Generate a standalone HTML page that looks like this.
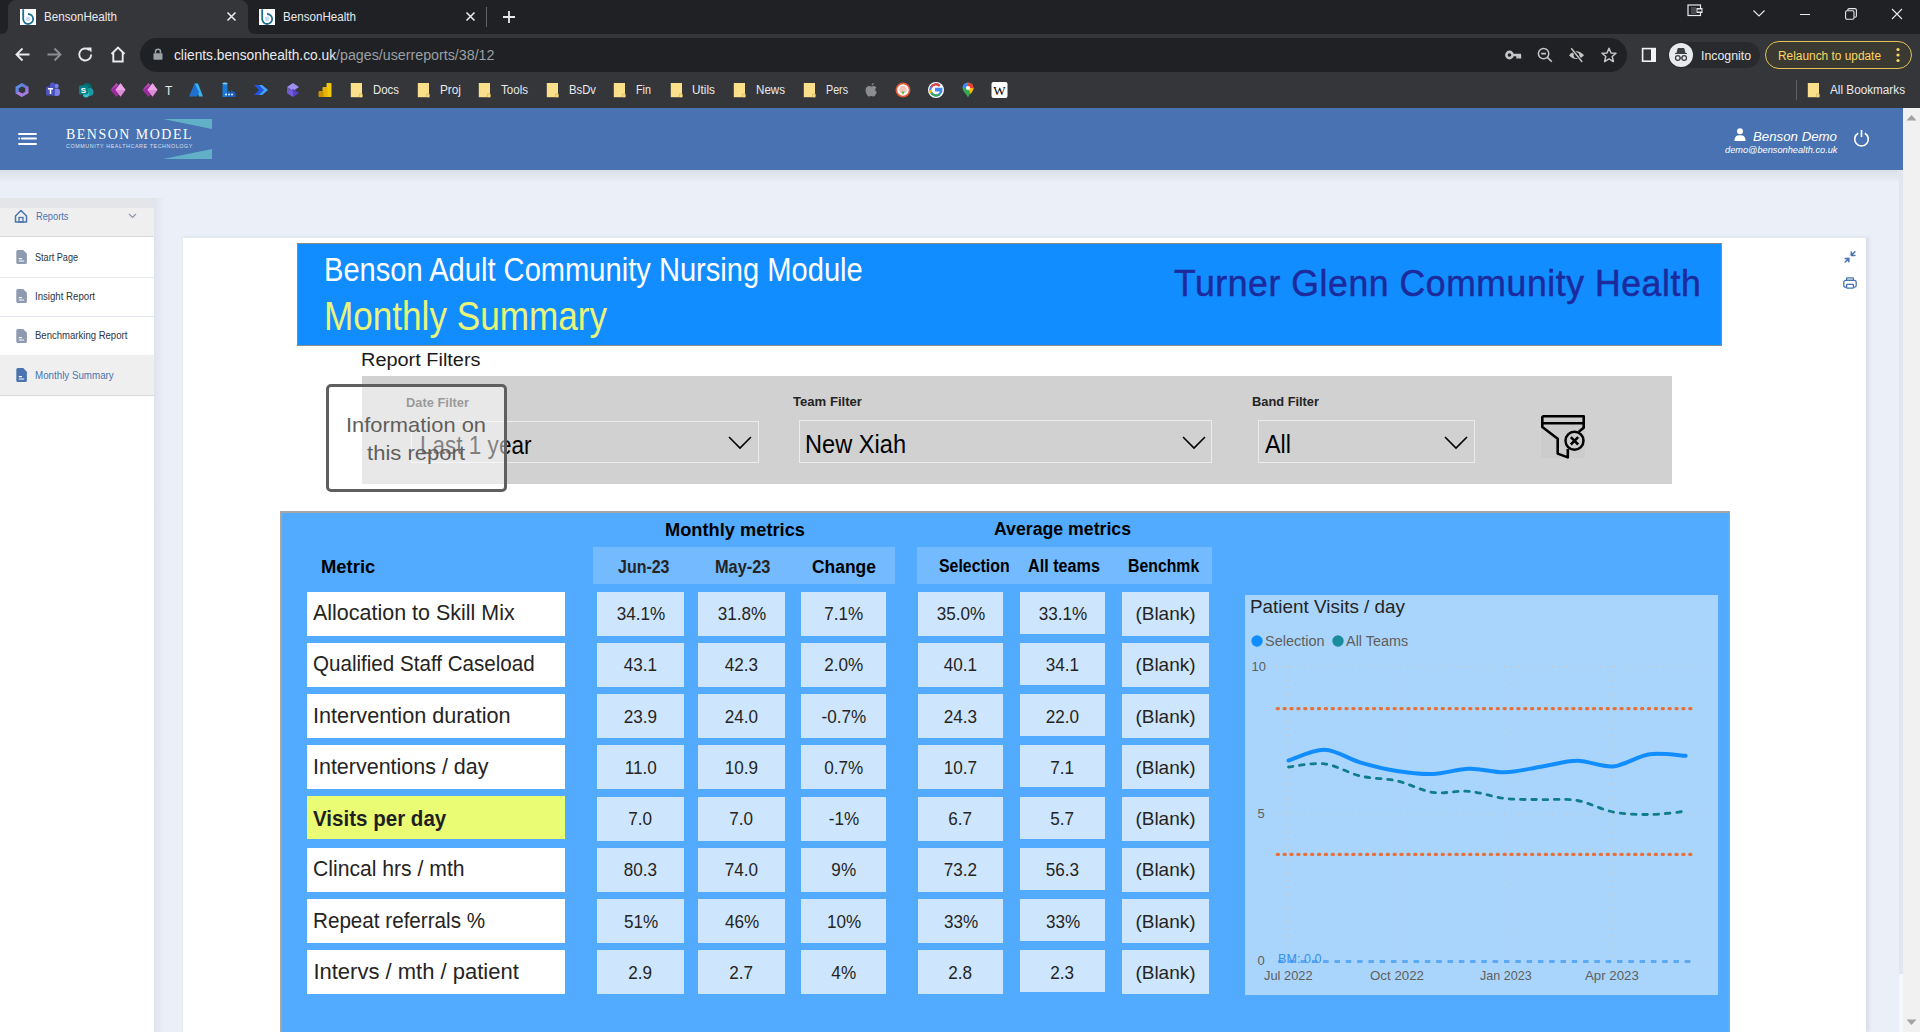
<!DOCTYPE html>
<html><head><meta charset="utf-8"><title>BensonHealth</title>
<style>
html,body{margin:0;padding:0;width:1920px;height:1032px;overflow:hidden;background:#ebeff7;font-family:'Liberation Sans', sans-serif;}
.b{position:absolute;box-sizing:border-box;}
.t{position:absolute;white-space:nowrap;}
</style></head><body>
<div class=b style="left:0px;top:0px;width:1920px;height:34px;background:#202124;"></div>
<div class=b style="left:0px;top:34px;width:1920px;height:74px;background:#35363a;"></div>
<div class=b style="left:8px;top:0px;width:240px;height:35px;background:#35363a;border-radius:8px 8px 0 0;"></div>
<svg class=b style="left:0px;top:26px;" width="8" height="8" viewBox="0 0 8 8"><path d="M0 8 Q8 8 8 0 L8 8 Z" fill="#35363a"/></svg>
<svg class=b style="left:248px;top:26px;" width="8" height="8" viewBox="0 0 8 8"><path d="M8 8 Q0 8 0 0 L0 8 Z" fill="#35363a"/></svg>
<svg class=b style="left:20px;top:9px;" width="16" height="16" viewBox="0 0 16 16"><rect x="0" y="0" width="16" height="16" fill="#fff"/><path d="M3.2 0.3 V10 A5 5 0 1 0 8 5" fill="none" stroke="#1f6f91" stroke-width="1.8"/><circle cx="8.1" cy="9.8" r="2.4" fill="#c9ddf2"/></svg>
<svg class=b style="left:259px;top:9px;" width="16" height="16" viewBox="0 0 16 16"><rect x="0" y="0" width="16" height="16" fill="#fff"/><path d="M3.2 0.3 V10 A5 5 0 1 0 8 5" fill="none" stroke="#1f6f91" stroke-width="1.8"/><circle cx="8.1" cy="9.8" r="2.4" fill="#c9ddf2"/></svg>
<div class=t style="top:11.0px;font-size:12px;line-height:12px;color:#e8eaed;left:44.0px;transform:scaleX(0.968);transform-origin:0 0;">BensonHealth</div>
<div class=t style="top:11.0px;font-size:12px;line-height:12px;color:#e8eaed;left:283.0px;transform:scaleX(0.968);transform-origin:0 0;">BensonHealth</div>
<svg class=b style="left:226px;top:11px;" width="11" height="11" viewBox="0 0 11 11"><path d="M1.5 1.5 L9.5 9.5 M9.5 1.5 L1.5 9.5" stroke="#e8eaed" stroke-width="1.6"/></svg>
<svg class=b style="left:465px;top:11px;" width="11" height="11" viewBox="0 0 11 11"><path d="M1.5 1.5 L9.5 9.5 M9.5 1.5 L1.5 9.5" stroke="#e8eaed" stroke-width="1.6"/></svg>
<div class=b style="left:486px;top:7px;width:1px;height:20px;background:#5f6368;"></div>
<svg class=b style="left:502px;top:10px;" width="14" height="14" viewBox="0 0 14 14"><path d="M7 1 V13 M1 7 H13" stroke="#e8eaed" stroke-width="1.8"/></svg>
<svg class=b style="left:1687px;top:4px;" width="18" height="13" viewBox="0 0 18 13"><rect x="1" y="1" width="12.5" height="10.5" fill="none" stroke="#e8eaed" stroke-width="1.2"/><rect x="9.5" y="4" width="6" height="5" fill="#e8eaed"/><rect x="10.5" y="5.5" width="4" height="2" fill="#202124"/><rect x="4" y="3" width="5" height="7" fill="#5f6368" opacity=".6"/></svg>
<svg class=b style="left:1752px;top:9px;" width="14" height="9" viewBox="0 0 14 9"><path d="M1.5 1.5 L7 7 L12.5 1.5" fill="none" stroke="#e8eaed" stroke-width="1.1"/></svg>
<div class=b style="left:1800px;top:14px;width:10px;height:1px;background:#e8eaed;"></div>
<svg class=b style="left:1845px;top:8px;" width="12" height="12" viewBox="0 0 12 12"><rect x="0.6" y="2.8" width="8.4" height="8.4" rx="1.4" fill="none" stroke="#e8eaed" stroke-width="1.1"/><path d="M2.8 2.5 V2 A1.4 1.4 0 0 1 4.2 0.6 H10 A1.4 1.4 0 0 1 11.4 2 V7.8 A1.4 1.4 0 0 1 10 9.2 H9.3" fill="none" stroke="#e8eaed" stroke-width="1.1"/></svg>
<svg class=b style="left:1891px;top:8px;" width="12" height="12" viewBox="0 0 12 12"><path d="M1 1 L11 11 M11 1 L1 11" stroke="#e8eaed" stroke-width="1.1"/></svg>
<svg class=b style="left:14px;top:46px;" width="17" height="17" viewBox="0 0 17 17"><path d="M15.5 8.5 H2.5 M8.5 2.5 L2.5 8.5 L8.5 14.5" fill="none" stroke="#e8eaed" stroke-width="1.9"/></svg>
<svg class=b style="left:46px;top:46px;" width="17" height="17" viewBox="0 0 17 17"><path d="M1.5 8.5 H14.5 M8.5 2.5 L14.5 8.5 L8.5 14.5" fill="none" stroke="#8b8e93" stroke-width="1.9"/></svg>
<svg class=b style="left:77px;top:46px;" width="17" height="17" viewBox="0 0 17 17"><path d="M14.2 8.5 A6 6 0 1 1 12.3 4.1" fill="none" stroke="#e8eaed" stroke-width="1.9"/><path d="M9.5 1.5 H14.5 V6.5 Z" fill="#e8eaed"/></svg>
<svg class=b style="left:109px;top:45px;" width="18" height="19" viewBox="0 0 18 19"><path d="M2.5 9 L9 2.5 L15.5 9 M4.3 7.5 V16.5 H13.7 V7.5" fill="none" stroke="#e8eaed" stroke-width="1.9"/></svg>
<div class=b style="left:140px;top:38px;width:1487px;height:34px;background:#202124;border-radius:17px;"></div>
<svg class=b style="left:153px;top:48px;" width="10" height="12" viewBox="0 0 10 12"><path d="M2.5 5.5 V3.8 A2.5 2.5 0 0 1 7.5 3.8 V5.5" fill="none" stroke="#9aa0a6" stroke-width="1.5"/><rect x="0.5" y="5.3" width="9" height="6.5" rx="1" fill="#9aa0a6"/></svg>
<div class=t style="top:47.8px;font-size:14px;line-height:14px;color:#e8eaed;left:174.0px;transform:scaleX(0.982);transform-origin:0 0;">clients.bensonhealth.co.uk</div>
<div class=t style="top:47.8px;font-size:14px;line-height:14px;color:#9aa0a6;left:336.0px;transform:scaleX(1.018);transform-origin:0 0;">/pages/userreports/38/12</div>
<svg class=b style="left:1505px;top:49px;" width="17" height="12" viewBox="0 0 17 12"><circle cx="4.5" cy="6" r="3.1" fill="none" stroke="#c4c7c5" stroke-width="2.6"/><path d="M7.5 6 H16 M12.5 6 V9.5 M15 6 V9.5" fill="none" stroke="#c4c7c5" stroke-width="2.4"/></svg>
<svg class=b style="left:1537px;top:47px;" width="16" height="16" viewBox="0 0 16 16"><circle cx="6.6" cy="6.6" r="5.2" fill="none" stroke="#c4c7c5" stroke-width="1.5"/><path d="M10.4 10.4 L14.8 14.8 M4.2 6.6 H9" stroke="#c4c7c5" stroke-width="1.6"/></svg>
<svg class=b style="left:1568px;top:47px;" width="17" height="16" viewBox="0 0 17 16"><path d="M1 8.2 Q8.5 0.5 16 8.2 Q8.5 15.9 1 8.2 Z" fill="#c4c7c5"/><circle cx="8.5" cy="8.2" r="2.8" fill="#202124"/><path d="M3.2 1.2 L14.2 15" stroke="#202124" stroke-width="3"/><path d="M3.2 1.2 L14.2 15" stroke="#c4c7c5" stroke-width="1.4"/></svg>
<svg class=b style="left:1601px;top:47px;" width="16" height="16" viewBox="0 0 16 16"><path d="M8 1.2 L10 6 L15 6.3 L11.2 9.5 L12.4 14.6 L8 11.9 L3.6 14.6 L4.8 9.5 L1 6.3 L6 6 Z" fill="none" stroke="#c4c7c5" stroke-width="1.5" stroke-linejoin="round"/></svg>
<svg class=b style="left:1641px;top:47px;" width="16" height="16" viewBox="0 0 16 16"><rect x="1.6" y="1.6" width="12.6" height="12.6" fill="none" stroke="#f1f3f4" stroke-width="1.6"/><rect x="10" y="1" width="5" height="14" fill="#f1f3f4"/></svg>
<div class=b style="left:1668px;top:42px;width:92px;height:26px;background:#292a2d;border-radius:13px;"></div>
<svg class=b style="left:1669px;top:43px;" width="24" height="24" viewBox="0 0 24 24"><circle cx="12" cy="12" r="12" fill="#e8eaed"/><path d="M6 10.5 H18 M8 10 L9.3 5.5 H14.7 L16 10" fill="#3c4043" stroke="#3c4043" stroke-width="1.2"/><circle cx="8.8" cy="15" r="2.3" fill="none" stroke="#3c4043" stroke-width="1.3"/><circle cx="15.2" cy="15" r="2.3" fill="none" stroke="#3c4043" stroke-width="1.3"/><path d="M11 15 H13" stroke="#3c4043" stroke-width="1.2"/></svg>
<div class=t style="top:49.5px;font-size:12.5px;line-height:12.5px;color:#e8eaed;left:1700.5px;transform:scaleX(0.986);transform-origin:0 0;">Incognito</div>
<div class=b style="left:1765px;top:41px;width:147px;height:28px;background:#3a3a33;border-radius:14px;border:1px solid #e2c35a;"></div>
<div class=t style="top:49.5px;font-size:12.5px;line-height:12.5px;color:#fdd663;left:1778.0px;transform:scaleX(0.950);transform-origin:0 0;">Relaunch to update</div>
<svg class=b style="left:1896px;top:47px;" width="4" height="16" viewBox="0 0 4 16"><circle cx="2" cy="2.5" r="1.6" fill="#fdd663"/><circle cx="2" cy="8" r="1.6" fill="#fdd663"/><circle cx="2" cy="13.5" r="1.6" fill="#fdd663"/></svg>
<svg class=b style="left:14px;top:82px;" width="16" height="16" viewBox="0 0 16 16"><defs><linearGradient id="m365" x1="0" y1="0" x2="1" y2="1"><stop offset="0" stop-color="#4aa8ee"/><stop offset=".5" stop-color="#6f6fd8"/><stop offset="1" stop-color="#d58be8"/></linearGradient></defs><path d="M8 1 L14.5 4.7 V11.3 L8 15 L1.5 11.3 V4.7 Z" fill="url(#m365)"/><path d="M8 4.5 L11.2 6.3 V9.7 L8 11.5 L4.8 9.7 V6.3 Z" fill="#35363a"/><path d="M1.5 11.3 L4.8 9.7 L8 11.5 L8 15 Z" fill="#b07be0"/></svg>
<svg class=b style="left:45px;top:82px;" width="16" height="16" viewBox="0 0 16 16"><circle cx="11.5" cy="4" r="2.2" fill="#7b83eb"/><rect x="8" y="6.5" width="7" height="7.5" rx="3" fill="#7b83eb"/><circle cx="7.5" cy="3.2" r="2.6" fill="#5059c9"/><rect x="1" y="4.5" width="9" height="9" rx="1" fill="#4b53bc"/><path d="M3 6.8 H8 M5.5 6.8 V12" stroke="#fff" stroke-width="1.5"/></svg>
<svg class=b style="left:78px;top:82px;" width="16" height="16" viewBox="0 0 16 16"><circle cx="9" cy="6" r="5" fill="#036c70"/><circle cx="11.5" cy="10" r="4" fill="#1a9ba1"/><circle cx="8" cy="12.5" r="3" fill="#37c6d0"/><rect x="1" y="3.5" width="9" height="9" rx="1" fill="#038387"/><text x="5.5" y="11" font-size="8" font-weight="bold" fill="#fff" text-anchor="middle" font-family="Liberation Sans">S</text></svg>
<svg class=b style="left:110px;top:82px;" width="16" height="16" viewBox="0 0 16 16"><path d="M0.5 8 L6.5 1 L10 5 L7 8 L10 11 L6.5 15 Z" fill="#9b2c9b"/><path d="M0.5 8 L6.5 1 L8.2 3 Z" fill="#b84bb5"/><path d="M5.5 8 L10.5 1.2 L15.5 8 L10.5 14.8 Z" fill="#e08ad9"/><path d="M5.5 8 L10.5 1.2 L15.5 8 Z" fill="#eaa7e4"/></svg>
<svg class=b style="left:142px;top:82px;" width="16" height="16" viewBox="0 0 16 16"><path d="M0.5 8 L6.5 1 L10 5 L7 8 L10 11 L6.5 15 Z" fill="#9b2c9b"/><path d="M0.5 8 L6.5 1 L8.2 3 Z" fill="#b84bb5"/><path d="M5.5 8 L10.5 1.2 L15.5 8 L10.5 14.8 Z" fill="#e08ad9"/><path d="M5.5 8 L10.5 1.2 L15.5 8 Z" fill="#eaa7e4"/></svg>
<svg class=b style="left:188px;top:82px;" width="16" height="16" viewBox="0 0 16 16"><path d="M6.5 1.5 H10 L15 14.5 H11 Z" fill="#39b2f0"/><path d="M6.5 1.5 L1 14.5 H9 L11 10 Z" fill="#1f6fd0"/></svg>
<svg class=b style="left:221px;top:82px;" width="16" height="16" viewBox="0 0 16 16"><rect x="1.5" y="1" width="5" height="14" fill="#1c7ad6"/><ellipse cx="4" cy="1.5" rx="2.5" ry="1" fill="#7ccaf5"/><path d="M6.5 15 V8 L10 10.5 V8 L14.5 11 V15 Z" fill="#1c5fbf"/><circle cx="5" cy="12.5" r="0.9" fill="#fff"/><circle cx="8" cy="12.5" r="0.9" fill="#fff"/><circle cx="11" cy="12.5" r="0.9" fill="#fff"/></svg>
<svg class=b style="left:253px;top:82px;" width="16" height="16" viewBox="0 0 16 16"><path d="M1 3 H9 L15 8 L9 13 H1 L6 8 Z" fill="#1d57e0"/><path d="M9 3 L15 8 L9 13 H6 L11 8 L6 3 Z" fill="#45a2f4"/></svg>
<svg class=b style="left:285px;top:82px;" width="16" height="16" viewBox="0 0 16 16"><path d="M8 1 L14 5 L8 9 L2 5 Z" fill="#9f8ef2"/><path d="M8 7 L14 11 L8 15 L2 11 Z" fill="#5a40c8"/><path d="M2 5 L8 9 L8 15 L2 11 Z" fill="#7b63e0" opacity=".8"/></svg>
<svg class=b style="left:317px;top:82px;" width="16" height="16" viewBox="0 0 16 16"><rect x="9.5" y="1" width="5" height="14" rx="0.8" fill="#f2c811"/><rect x="5.5" y="5" width="5" height="10" rx="0.8" fill="#e8b30b"/><rect x="1.5" y="9" width="5" height="6" rx="0.8" fill="#c99200"/></svg>
<div class=t style="top:85.0px;font-size:12px;line-height:12px;color:#e8eaed;left:165.0px;">T</div>
<svg class=b style="left:350px;top:82px;" width="14" height="16" viewBox="0 0 14 16"><rect x="0.8" y="1" width="11.2" height="14.2" fill="#fbe08c"/><path d="M9.6 15.2 V12 H12.4 V15.2" fill="#fbe08c" stroke="#c9a94a" stroke-width="0.6"/></svg>
<div class=t style="top:84.0px;font-size:12.5px;line-height:12.5px;color:#e8eaed;left:373.0px;transform:scaleX(0.913);transform-origin:0 0;">Docs</div>
<svg class=b style="left:417px;top:82px;" width="14" height="16" viewBox="0 0 14 16"><rect x="0.8" y="1" width="11.2" height="14.2" fill="#fbe08c"/><path d="M9.6 15.2 V12 H12.4 V15.2" fill="#fbe08c" stroke="#c9a94a" stroke-width="0.6"/></svg>
<div class=t style="top:84.0px;font-size:12.5px;line-height:12.5px;color:#e8eaed;left:440.0px;transform:scaleX(0.944);transform-origin:0 0;">Proj</div>
<svg class=b style="left:478px;top:82px;" width="14" height="16" viewBox="0 0 14 16"><rect x="0.8" y="1" width="11.2" height="14.2" fill="#fbe08c"/><path d="M9.6 15.2 V12 H12.4 V15.2" fill="#fbe08c" stroke="#c9a94a" stroke-width="0.6"/></svg>
<div class=t style="top:84.0px;font-size:12.5px;line-height:12.5px;color:#e8eaed;left:501.0px;transform:scaleX(0.925);transform-origin:0 0;">Tools</div>
<svg class=b style="left:546px;top:82px;" width="14" height="16" viewBox="0 0 14 16"><rect x="0.8" y="1" width="11.2" height="14.2" fill="#fbe08c"/><path d="M9.6 15.2 V12 H12.4 V15.2" fill="#fbe08c" stroke="#c9a94a" stroke-width="0.6"/></svg>
<div class=t style="top:84.0px;font-size:12.5px;line-height:12.5px;color:#e8eaed;left:569.0px;transform:scaleX(0.904);transform-origin:0 0;">BsDv</div>
<svg class=b style="left:613px;top:82px;" width="14" height="16" viewBox="0 0 14 16"><rect x="0.8" y="1" width="11.2" height="14.2" fill="#fbe08c"/><path d="M9.6 15.2 V12 H12.4 V15.2" fill="#fbe08c" stroke="#c9a94a" stroke-width="0.6"/></svg>
<div class=t style="top:84.0px;font-size:12.5px;line-height:12.5px;color:#e8eaed;left:636.0px;transform:scaleX(0.863);transform-origin:0 0;">Fin</div>
<svg class=b style="left:670px;top:82px;" width="14" height="16" viewBox="0 0 14 16"><rect x="0.8" y="1" width="11.2" height="14.2" fill="#fbe08c"/><path d="M9.6 15.2 V12 H12.4 V15.2" fill="#fbe08c" stroke="#c9a94a" stroke-width="0.6"/></svg>
<div class=t style="top:84.0px;font-size:12.5px;line-height:12.5px;color:#e8eaed;left:692.0px;transform:scaleX(0.946);transform-origin:0 0;">Utils</div>
<svg class=b style="left:733px;top:82px;" width="14" height="16" viewBox="0 0 14 16"><rect x="0.8" y="1" width="11.2" height="14.2" fill="#fbe08c"/><path d="M9.6 15.2 V12 H12.4 V15.2" fill="#fbe08c" stroke="#c9a94a" stroke-width="0.6"/></svg>
<div class=t style="top:84.0px;font-size:12.5px;line-height:12.5px;color:#e8eaed;left:756.0px;transform:scaleX(0.928);transform-origin:0 0;">News</div>
<svg class=b style="left:803px;top:82px;" width="14" height="16" viewBox="0 0 14 16"><rect x="0.8" y="1" width="11.2" height="14.2" fill="#fbe08c"/><path d="M9.6 15.2 V12 H12.4 V15.2" fill="#fbe08c" stroke="#c9a94a" stroke-width="0.6"/></svg>
<div class=t style="top:84.0px;font-size:12.5px;line-height:12.5px;color:#e8eaed;left:826.0px;transform:scaleX(0.856);transform-origin:0 0;">Pers</div>
<svg class=b style="left:864px;top:82px;" width="15" height="16" viewBox="0 0 15 16"><path d="M7.5 4.5 C9 3.6 11.5 3.8 12.4 5.6 C10.8 6.6 10.9 9.2 12.8 10 C12.2 12 10.8 14.6 9.4 14.6 C8.4 14.6 8.2 14 7.3 14 C6.4 14 6.1 14.6 5.2 14.6 C3.6 14.6 1.6 11 1.6 8.3 C1.6 5.3 3.6 4 5.1 4 C6.2 4 6.8 4.6 7.5 4.5 Z M7.6 3.6 C7.5 2.3 8.6 1.1 9.8 1 C9.9 2.3 8.8 3.6 7.6 3.6 Z" fill="#8a8c90"/></svg>
<svg class=b style="left:895px;top:82px;" width="16" height="16" viewBox="0 0 16 16"><circle cx="8" cy="8" r="7.5" fill="#de5833"/><circle cx="8" cy="8" r="5.8" fill="#fff"/><circle cx="8" cy="7.5" r="3.8" fill="#de5833" opacity=".35"/><path d="M6.5 9.5 L9.5 9.5 L8 13 Z" fill="#4cba3c"/></svg>
<svg class=b style="left:928px;top:82px;" width="16" height="16" viewBox="0 0 16 16"><circle cx="8" cy="8" r="8" fill="#fff"/><path d="M12.6 8.3 H8.1 V6.9 H13.4 A5.6 5.6 0 1 1 11.8 3.8" fill="none" stroke="#4285f4" stroke-width="2.2"/><path d="M3.2 5.3 A5.6 5.6 0 0 1 11.8 3.8" fill="none" stroke="#ea4335" stroke-width="2.2"/><path d="M2.6 8 A5.6 5.6 0 0 0 3.2 10.7" fill="none" stroke="#fbbc05" stroke-width="2.2"/><path d="M3.2 10.7 A5.6 5.6 0 0 0 11.6 12.4" fill="none" stroke="#34a853" stroke-width="2.2"/></svg>
<svg class=b style="left:961px;top:82px;" width="14" height="16" viewBox="0 0 14 16"><path d="M7 15.5 C5 11.5 1.5 9 1.5 6 A5.5 5.5 0 0 1 12.5 6 C12.5 9 9 11.5 7 15.5 Z" fill="#34a853"/><path d="M1.5 6 A5.5 5.5 0 0 1 7 0.5 L7 6 Z" fill="#4285f4"/><path d="M7 0.5 A5.5 5.5 0 0 1 12.5 6 L7 6 Z" fill="#ea4335"/><path d="M12.5 6 C12.5 8 11 10 9.5 12 L7 6 Z" fill="#fbbc05"/><circle cx="7" cy="6" r="2.1" fill="#fff"/></svg>
<svg class=b style="left:991px;top:82px;" width="17" height="16" viewBox="0 0 17 16"><rect x="0.5" y="0" width="16" height="16" rx="2" fill="#fff"/><text x="8.5" y="13" font-size="13" font-family="Liberation Serif" text-anchor="middle" fill="#000">W</text></svg>
<div class=b style="left:1796px;top:80px;width:1px;height:20px;background:#5f6368;"></div>
<svg class=b style="left:1807px;top:82px;" width="14" height="16" viewBox="0 0 14 16"><rect x="0.8" y="1" width="11.2" height="14.2" fill="#fbe08c"/><path d="M9.6 15.2 V12 H12.4 V15.2" fill="#fbe08c" stroke="#c9a94a" stroke-width="0.6"/></svg>
<div class=t style="top:84.0px;font-size:12.5px;line-height:12.5px;color:#e8eaed;left:1830.0px;transform:scaleX(0.939);transform-origin:0 0;">All Bookmarks</div>
<div class=b style="left:1903px;top:108px;width:17px;height:924px;background:#f1f1f1;"></div>
<svg class=b style="left:1906px;top:114px;" width="11" height="7" viewBox="0 0 11 7"><path d="M0.5 6.5 L5.5 1 L10.5 6.5 Z" fill="#a3a3a3"/></svg>
<svg class=b style="left:1906px;top:1019px;" width="11" height="7" viewBox="0 0 11 7"><path d="M0.5 0.5 L5.5 6 L10.5 0.5 Z" fill="#a3a3a3"/></svg>
<div class=b style="left:0px;top:108px;width:1903px;height:62px;background:#4872b1;"></div>
<div class=b style="left:0px;top:170px;width:1903px;height:12px;background:linear-gradient(#d9dee7,#ebeff7);"></div>
<div class=b style="left:1899px;top:170px;width:4px;height:804px;background:#e2e6ef;"></div>
<div class=b style="left:1899px;top:974px;width:4px;height:58px;background:#f6f7fb;"></div>
<svg class=b style="left:17px;top:131px;" width="20" height="15" viewBox="0 0 20 15"><path d="M2 3 H19 M4.8 7.5 H19 M2 13 H19" stroke="#fff" stroke-width="1.9" stroke-linecap="round"/><circle cx="2.2" cy="7.5" r="1" fill="#fff"/></svg>
<svg class=b style="left:163px;top:119px;" width="49" height="41" viewBox="0 0 49 41"><path d="M0 0 H49 V10 Z" fill="#62b0c8"/><path d="M0 40 H49 V30 Z" fill="#62b0c8"/><path d="M49 10 V31" stroke="#62b0c8" stroke-width="0"/></svg>
<div class=t style="top:126.7px;font-size:14.5px;line-height:14.5px;color:#ffffff;font-family:'Liberation Serif', serif;letter-spacing:1.6px;left:66.0px;transform:scaleX(0.959);transform-origin:0 0;">BENSON MODEL</div>
<div class=t style="top:143.5px;font-size:5.4px;line-height:5.4px;color:rgba(255,255,255,.8);letter-spacing:0.6px;left:66.0px;transform:scaleX(0.990);transform-origin:0 0;">COMMUNITY HEALTHCARE TECHNOLOGY</div>
<svg class=b style="left:1734px;top:128px;" width="12" height="13" viewBox="0 0 12 13"><circle cx="6" cy="3.2" r="3" fill="#fff"/><path d="M0.5 13 C0.5 8.5 2.5 7.3 6 7.3 C9.5 7.3 11.5 8.5 11.5 13 Z" fill="#fff"/></svg>
<div class=t style="top:130.0px;font-size:13.2px;line-height:13.2px;color:#ffffff;font-style:italic;left:1752.5px;transform:scaleX(1.005);transform-origin:0 0;">Benson Demo</div>
<div class=t style="top:144.5px;font-size:9.5px;line-height:9.5px;color:#ffffff;font-style:italic;left:1725.0px;transform:scaleX(0.971);transform-origin:0 0;">demo@bensonhealth.co.uk</div>
<svg class=b style="left:1853px;top:129px;" width="17" height="18" viewBox="0 0 17 18"><path d="M5.2 4.3 A6.8 6.8 0 1 0 11.8 4.3" fill="none" stroke="#fff" stroke-width="1.6"/><path d="M8.5 1 V8" stroke="#fff" stroke-width="1.6"/></svg>
<div class=b style="left:154px;top:198px;width:10px;height:834px;background:linear-gradient(90deg,rgba(222,227,237,1),rgba(235,239,247,0));"></div>
<div class=b style="left:0px;top:198px;width:154px;height:834px;background:#ffffff;"></div>
<div class=b style="left:0px;top:198px;width:154px;height:10px;background:#e3e5e8;"></div>
<div class=b style="left:0px;top:208px;width:154px;height:28px;background:#efefef;"></div>
<div class=b style="left:0px;top:236px;width:154px;height:1px;background:#d7d9dd;"></div>
<svg class=b style="left:14px;top:208px;" width="14" height="16" viewBox="0 0 14 16"><path d="M1.5 8 L7 2.5 L12.5 8 V14 H1.5 Z" fill="none" stroke="#4a73b0" stroke-width="1.5" stroke-linejoin="round"/><rect x="5" y="9.5" width="4" height="4.5" fill="none" stroke="#4a73b0" stroke-width="1.3"/></svg>
<div class=t style="top:212.0px;font-size:10px;line-height:10px;color:#4a73b0;left:35.5px;transform:scaleX(0.928);transform-origin:0 0;">Reports</div>
<svg class=b style="left:128px;top:213px;" width="9" height="6" viewBox="0 0 9 6"><path d="M1 1 L4.5 4.5 L8 1" fill="none" stroke="#8a97ad" stroke-width="1.2"/></svg>
<div class=b style="left:0px;top:277px;width:154px;height:1px;background:#e4e8f0;"></div>
<svg class=b style="left:15.5px;top:250px;" width="12" height="14" viewBox="0 0 12 14"><path d="M0.3 1.6 A1.6 1.6 0 0 1 1.9 0 H7.2 L10.9 3.7 V12.4 A1.6 1.6 0 0 1 9.3 14 H1.9 A1.6 1.6 0 0 1 0.3 12.4 Z" fill="#8e9ab0"/><path d="M2.8 8.6 H6 M2.8 11 H8.2" stroke="#fff" stroke-width="1.1"/></svg>
<div class=t style="top:251.8px;font-size:10.6px;line-height:10.6px;color:#2b3340;left:35.3px;transform:scaleX(0.859);transform-origin:0 0;">Start Page</div>
<div class=b style="left:0px;top:316px;width:154px;height:1px;background:#e4e8f0;"></div>
<svg class=b style="left:15.5px;top:289px;" width="12" height="14" viewBox="0 0 12 14"><path d="M0.3 1.6 A1.6 1.6 0 0 1 1.9 0 H7.2 L10.9 3.7 V12.4 A1.6 1.6 0 0 1 9.3 14 H1.9 A1.6 1.6 0 0 1 0.3 12.4 Z" fill="#8e9ab0"/><path d="M2.8 8.6 H6 M2.8 11 H8.2" stroke="#fff" stroke-width="1.1"/></svg>
<div class=t style="top:290.6px;font-size:10.6px;line-height:10.6px;color:#2b3340;left:35.3px;transform:scaleX(0.910);transform-origin:0 0;">Insight Report</div>
<div class=b style="left:0px;top:355px;width:154px;height:1px;background:#e4e8f0;"></div>
<svg class=b style="left:15.5px;top:329px;" width="12" height="14" viewBox="0 0 12 14"><path d="M0.3 1.6 A1.6 1.6 0 0 1 1.9 0 H7.2 L10.9 3.7 V12.4 A1.6 1.6 0 0 1 9.3 14 H1.9 A1.6 1.6 0 0 1 0.3 12.4 Z" fill="#8e9ab0"/><path d="M2.8 8.6 H6 M2.8 11 H8.2" stroke="#fff" stroke-width="1.1"/></svg>
<div class=t style="top:330.1px;font-size:10.6px;line-height:10.6px;color:#2b3340;left:35.3px;transform:scaleX(0.901);transform-origin:0 0;">Benchmarking Report</div>
<div class=b style="left:0px;top:355px;width:154px;height:40px;background:#efefef;"></div>
<div class=b style="left:0px;top:395px;width:154px;height:1px;background:#d7d9dd;"></div>
<svg class=b style="left:15.5px;top:368px;" width="12" height="14" viewBox="0 0 12 14"><path d="M0.3 1.6 A1.6 1.6 0 0 1 1.9 0 H7.2 L10.9 3.7 V12.4 A1.6 1.6 0 0 1 9.3 14 H1.9 A1.6 1.6 0 0 1 0.3 12.4 Z" fill="#4a73b0"/><path d="M2.8 8.6 H6 M2.8 11 H8.2" stroke="#fff" stroke-width="1.1"/></svg>
<div class=t style="top:369.6px;font-size:10.6px;line-height:10.6px;color:#4a73b0;left:35.3px;transform:scaleX(0.922);transform-origin:0 0;">Monthly Summary</div>
<div class=b style="left:182px;top:237px;width:1684px;height:795px;background:#ffffff;border-top:1px solid #e3e8f1;border-left:1px solid #e3e8f1;box-shadow:3px 0 3px rgba(180,190,210,.35);"></div>
<svg class=b style="left:1843px;top:250px;" width="14" height="14" viewBox="0 0 14 14"><path d="M11.9 1.8 L8.3 5.4 M8.3 2.1 V5.4 H11.9 M2.2 12 L5.8 8.4 M2.2 8.4 H5.8 V11.7" fill="none" stroke="#4a73b0" stroke-width="1.5" stroke-linecap="round" stroke-linejoin="round"/></svg>
<svg class=b style="left:1842px;top:276px;" width="16" height="14" viewBox="0 0 16 14"><rect x="4.6" y="1.8" width="6.8" height="2.6" rx="0.8" fill="none" stroke="#4a73b0" stroke-width="1.3"/><rect x="1.8" y="4.4" width="12.4" height="6.8" rx="1.8" fill="none" stroke="#4a73b0" stroke-width="1.3"/><rect x="4.6" y="8.3" width="6.8" height="3.9" rx="0.6" fill="#fff" stroke="#4a73b0" stroke-width="1.3"/></svg>
<div class=b style="left:297px;top:243px;width:1425px;height:103px;background:#118dff;border:1px solid #8c8c8c;"></div>
<div class=t style="top:252.7px;font-size:33px;line-height:33px;color:#ffffff;left:324.0px;transform:scaleX(0.882);transform-origin:0 0;">Benson Adult Community Nursing Module</div>
<div class=t style="top:296.2px;font-size:40px;line-height:40px;color:#e9f57a;left:323.5px;transform:scaleX(0.878);transform-origin:0 0;">Monthly Summary</div>
<div class=t style="top:264.6px;font-size:37px;line-height:37px;color:#1c2a9c;letter-spacing:0.6px;left:1174.0px;transform:scaleX(0.961);transform-origin:0 0;-webkit-text-stroke:0.5px #1c2a9c;">Turner Glenn Community Health</div>
<div class=t style="top:351.9px;font-size:17.5px;line-height:17.5px;color:#1a1a1a;left:361.2px;transform:scaleX(1.138);transform-origin:0 0;">Report Filters</div>
<div class=b style="left:362px;top:376px;width:1310px;height:108px;background:#d1d1d1;"></div>
<div class=t style="top:396.2px;font-size:13.5px;line-height:13.5px;color:#333333;font-weight:bold;left:405.7px;transform:scaleX(0.954);transform-origin:0 0;">Date Filter</div>
<div class=t style="top:395.3px;font-size:13.5px;line-height:13.5px;color:#252423;font-weight:bold;left:793.0px;transform:scaleX(0.971);transform-origin:0 0;">Team Filter</div>
<div class=t style="top:395.3px;font-size:13.5px;line-height:13.5px;color:#252423;font-weight:bold;left:1252.0px;transform:scaleX(0.950);transform-origin:0 0;">Band Filter</div>
<div class=b style="left:411px;top:421px;width:348px;height:42px;background:transparent;border:1.5px solid #ececec;"></div>
<div class=b style="left:799px;top:420px;width:413px;height:43px;background:transparent;border:1.5px solid #ececec;"></div>
<div class=b style="left:1258px;top:420px;width:217px;height:43px;background:transparent;border:1.5px solid #ececec;"></div>
<div class=t style="top:432.8px;font-size:25px;line-height:25px;color:#000000;left:419.5px;transform:scaleX(0.901);transform-origin:0 0;">Last 1 year</div>
<div class=t style="top:432.0px;font-size:25px;line-height:25px;color:#000000;left:805.0px;transform:scaleX(0.944);transform-origin:0 0;">New Xiah</div>
<div class=t style="top:432.0px;font-size:25px;line-height:25px;color:#000000;left:1265.0px;transform:scaleX(0.935);transform-origin:0 0;">All</div>
<svg class=b style="left:728px;top:436px;" width="24" height="14" viewBox="0 0 24 14"><path d="M1 1 L12 12 L23 1" fill="none" stroke="#000" stroke-width="1.6"/></svg>
<svg class=b style="left:1182px;top:436px;" width="24" height="14" viewBox="0 0 24 14"><path d="M1 1 L12 12 L23 1" fill="none" stroke="#000" stroke-width="1.6"/></svg>
<svg class=b style="left:1444px;top:436px;" width="24" height="14" viewBox="0 0 24 14"><path d="M1 1 L12 12 L23 1" fill="none" stroke="#000" stroke-width="1.6"/></svg>
<div class=b style="left:1541px;top:415px;width:44px;height:43px;background:#cccccc;"></div>
<svg class=b style="left:1541px;top:415px;" width="45" height="44" viewBox="0 0 45 44"><path d="M1.3 1.3 H42.7 V12.8 L37.8 16.7 M1.3 8.3 H42.7 M1.3 1.3 V12 L16.7 23.7 V38.6 L26.8 42.4 V34" fill="none" stroke="#000" stroke-width="2.6" stroke-linejoin="round"/><circle cx="33.5" cy="25.8" r="9" fill="#cccccc" stroke="#000" stroke-width="2.5"/><path d="M29.8 22.1 L37.2 29.5 M37.2 22.1 L29.8 29.5" stroke="#000" stroke-width="2.5"/></svg>
<div class=b style="left:326px;top:384px;width:181px;height:108px;background:rgba(255,255,255,0.5);border:3px solid #5f5f5f;border-radius:5px;"></div>
<div class=t style="top:413.7px;font-size:21px;line-height:21px;color:#605e5c;left:345.5px;transform:scaleX(1.043);transform-origin:0 0;">Information on</div>
<div class=t style="top:442.0px;font-size:21px;line-height:21px;color:#605e5c;left:366.5px;transform:scaleX(1.050);transform-origin:0 0;">this report</div>
<div class=b style="left:280px;top:511px;width:1450px;height:521px;background:#53abff;border:2px solid #aaa5a2;border-bottom:none;border-right-width:1.5px;"></div>
<div class=t style="top:557.0px;font-size:19px;line-height:19px;color:#000000;font-weight:bold;left:321.2px;transform:scaleX(0.970);transform-origin:0 0;">Metric</div>
<div class=t style="top:520.7px;font-size:18px;line-height:18px;color:#000000;font-weight:bold;left:665.0px;transform:scaleX(1.014);transform-origin:0 0;">Monthly metrics</div>
<div class=t style="top:520.3px;font-size:18px;line-height:18px;color:#000000;font-weight:bold;left:994.0px;transform:scaleX(0.983);transform-origin:0 0;">Average metrics</div>
<div class=b style="left:593px;top:547px;width:302px;height:37px;background:#73baff;"></div>
<div class=b style="left:917px;top:547px;width:295px;height:37px;background:#73baff;"></div>
<div class=t style="top:558.4px;font-size:18px;line-height:18px;color:#252423;font-weight:bold;left:617.5px;transform:scaleX(0.887);transform-origin:0 0;">Jun-23</div>
<div class=t style="top:558.4px;font-size:18px;line-height:18px;color:#252423;font-weight:bold;left:715.0px;transform:scaleX(0.906);transform-origin:0 0;">May-23</div>
<div class=t style="top:558.4px;font-size:18px;line-height:18px;color:#000000;font-weight:bold;left:812.0px;transform:scaleX(0.969);transform-origin:0 0;">Change</div>
<div class=t style="top:556.9px;font-size:18px;line-height:18px;color:#000000;font-weight:bold;left:938.8px;transform:scaleX(0.882);transform-origin:0 0;">Selection</div>
<div class=t style="top:556.9px;font-size:18px;line-height:18px;color:#000000;font-weight:bold;left:1028.4px;transform:scaleX(0.899);transform-origin:0 0;">All teams</div>
<div class=t style="top:556.9px;font-size:18px;line-height:18px;color:#000000;font-weight:bold;left:1127.8px;transform:scaleX(0.879);transform-origin:0 0;">Benchmk</div>
<div class=b style="left:307px;top:592px;width:258px;height:44px;background:#ffffff;"></div>
<div class=t style="top:602.0px;font-size:22px;line-height:22px;color:#252423;left:313.4px;transform:scaleX(0.976);transform-origin:0 0;">Allocation to Skill Mix</div>
<div class=b style="left:597px;top:592px;width:87px;height:44px;background:#cde6fd;"></div>
<div class=t style="top:604.0px;font-size:19px;line-height:19px;color:#252423;left:613.6px;transform:scaleX(0.9);transform-origin:50% 0;">34.1%</div>
<div class=b style="left:698px;top:592px;width:87px;height:44px;background:#cde6fd;"></div>
<div class=t style="top:604.0px;font-size:19px;line-height:19px;color:#252423;left:714.6px;transform:scaleX(0.9);transform-origin:50% 0;">31.8%</div>
<div class=b style="left:801px;top:592px;width:85px;height:44px;background:#cde6fd;"></div>
<div class=t style="top:604.0px;font-size:19px;line-height:19px;color:#252423;left:821.8px;transform:scaleX(0.9);transform-origin:50% 0;">7.1%</div>
<div class=b style="left:918px;top:592px;width:85px;height:44px;background:#cde6fd;"></div>
<div class=t style="top:604.0px;font-size:19px;line-height:19px;color:#252423;left:933.6px;transform:scaleX(0.9);transform-origin:50% 0;">35.0%</div>
<div class=b style="left:1020px;top:592px;width:85px;height:42px;background:#cde6fd;"></div>
<div class=t style="top:604.0px;font-size:19px;line-height:19px;color:#252423;left:1035.6px;transform:scaleX(0.9);transform-origin:50% 0;">33.1%</div>
<div class=b style="left:1122px;top:592px;width:87px;height:44px;background:#cde6fd;"></div>
<div class=t style="top:604.0px;font-size:19px;line-height:19px;color:#252423;left:1135.4px;transform:scaleX(1.0);transform-origin:50% 0;">(Blank)</div>
<div class=b style="left:307px;top:643px;width:258px;height:44px;background:#ffffff;"></div>
<div class=t style="top:653.2px;font-size:22px;line-height:22px;color:#252423;left:313.4px;transform:scaleX(0.936);transform-origin:0 0;">Qualified Staff Caseload</div>
<div class=b style="left:597px;top:643px;width:87px;height:44px;background:#cde6fd;"></div>
<div class=t style="top:655.2px;font-size:19px;line-height:19px;color:#252423;left:622.0px;transform:scaleX(0.9);transform-origin:50% 0;">43.1</div>
<div class=b style="left:698px;top:643px;width:87px;height:44px;background:#cde6fd;"></div>
<div class=t style="top:655.2px;font-size:19px;line-height:19px;color:#252423;left:723.0px;transform:scaleX(0.9);transform-origin:50% 0;">42.3</div>
<div class=b style="left:801px;top:643px;width:85px;height:44px;background:#cde6fd;"></div>
<div class=t style="top:655.2px;font-size:19px;line-height:19px;color:#252423;left:821.8px;transform:scaleX(0.9);transform-origin:50% 0;">2.0%</div>
<div class=b style="left:918px;top:643px;width:85px;height:44px;background:#cde6fd;"></div>
<div class=t style="top:655.2px;font-size:19px;line-height:19px;color:#252423;left:942.0px;transform:scaleX(0.9);transform-origin:50% 0;">40.1</div>
<div class=b style="left:1020px;top:643px;width:85px;height:42px;background:#cde6fd;"></div>
<div class=t style="top:655.2px;font-size:19px;line-height:19px;color:#252423;left:1044.0px;transform:scaleX(0.9);transform-origin:50% 0;">34.1</div>
<div class=b style="left:1122px;top:643px;width:87px;height:44px;background:#cde6fd;"></div>
<div class=t style="top:655.2px;font-size:19px;line-height:19px;color:#252423;left:1135.4px;transform:scaleX(1.0);transform-origin:50% 0;">(Blank)</div>
<div class=b style="left:307px;top:694px;width:258px;height:44px;background:#ffffff;"></div>
<div class=t style="top:704.5px;font-size:22px;line-height:22px;color:#252423;left:313.4px;transform:scaleX(0.985);transform-origin:0 0;">Intervention duration</div>
<div class=b style="left:597px;top:694px;width:87px;height:44px;background:#cde6fd;"></div>
<div class=t style="top:706.5px;font-size:19px;line-height:19px;color:#252423;left:622.0px;transform:scaleX(0.9);transform-origin:50% 0;">23.9</div>
<div class=b style="left:698px;top:694px;width:87px;height:44px;background:#cde6fd;"></div>
<div class=t style="top:706.5px;font-size:19px;line-height:19px;color:#252423;left:723.0px;transform:scaleX(0.9);transform-origin:50% 0;">24.0</div>
<div class=b style="left:801px;top:694px;width:85px;height:44px;background:#cde6fd;"></div>
<div class=t style="top:706.5px;font-size:19px;line-height:19px;color:#252423;left:818.7px;transform:scaleX(0.9);transform-origin:50% 0;">-0.7%</div>
<div class=b style="left:918px;top:694px;width:85px;height:44px;background:#cde6fd;"></div>
<div class=t style="top:706.5px;font-size:19px;line-height:19px;color:#252423;left:942.0px;transform:scaleX(0.9);transform-origin:50% 0;">24.3</div>
<div class=b style="left:1020px;top:694px;width:85px;height:42px;background:#cde6fd;"></div>
<div class=t style="top:706.5px;font-size:19px;line-height:19px;color:#252423;left:1044.0px;transform:scaleX(0.9);transform-origin:50% 0;">22.0</div>
<div class=b style="left:1122px;top:694px;width:87px;height:44px;background:#cde6fd;"></div>
<div class=t style="top:706.5px;font-size:19px;line-height:19px;color:#252423;left:1135.4px;transform:scaleX(1.0);transform-origin:50% 0;">(Blank)</div>
<div class=b style="left:307px;top:745px;width:258px;height:44px;background:#ffffff;"></div>
<div class=t style="top:755.8px;font-size:22px;line-height:22px;color:#252423;left:313.4px;transform:scaleX(0.976);transform-origin:0 0;">Interventions / day</div>
<div class=b style="left:597px;top:745px;width:87px;height:44px;background:#cde6fd;"></div>
<div class=t style="top:757.8px;font-size:19px;line-height:19px;color:#252423;left:622.7px;transform:scaleX(0.9);transform-origin:50% 0;">11.0</div>
<div class=b style="left:698px;top:745px;width:87px;height:44px;background:#cde6fd;"></div>
<div class=t style="top:757.8px;font-size:19px;line-height:19px;color:#252423;left:723.0px;transform:scaleX(0.9);transform-origin:50% 0;">10.9</div>
<div class=b style="left:801px;top:745px;width:85px;height:44px;background:#cde6fd;"></div>
<div class=t style="top:757.8px;font-size:19px;line-height:19px;color:#252423;left:821.8px;transform:scaleX(0.9);transform-origin:50% 0;">0.7%</div>
<div class=b style="left:918px;top:745px;width:85px;height:44px;background:#cde6fd;"></div>
<div class=t style="top:757.8px;font-size:19px;line-height:19px;color:#252423;left:942.0px;transform:scaleX(0.9);transform-origin:50% 0;">10.7</div>
<div class=b style="left:1020px;top:745px;width:85px;height:42px;background:#cde6fd;"></div>
<div class=t style="top:757.8px;font-size:19px;line-height:19px;color:#252423;left:1049.3px;transform:scaleX(0.9);transform-origin:50% 0;">7.1</div>
<div class=b style="left:1122px;top:745px;width:87px;height:44px;background:#cde6fd;"></div>
<div class=t style="top:757.8px;font-size:19px;line-height:19px;color:#252423;left:1135.4px;transform:scaleX(1.0);transform-origin:50% 0;">(Blank)</div>
<div class=b style="left:307px;top:796px;width:258px;height:43px;background:#eafb74;"></div>
<div class=t style="top:807.5px;font-size:22px;line-height:22px;color:#1f1f1f;font-weight:bold;left:313.4px;transform:scaleX(0.934);transform-origin:0 0;">Visits per day</div>
<div class=b style="left:597px;top:797px;width:87px;height:44px;background:#cde6fd;"></div>
<div class=t style="top:809.0px;font-size:19px;line-height:19px;color:#252423;left:627.3px;transform:scaleX(0.9);transform-origin:50% 0;">7.0</div>
<div class=b style="left:698px;top:797px;width:87px;height:44px;background:#cde6fd;"></div>
<div class=t style="top:809.0px;font-size:19px;line-height:19px;color:#252423;left:728.3px;transform:scaleX(0.9);transform-origin:50% 0;">7.0</div>
<div class=b style="left:801px;top:797px;width:85px;height:44px;background:#cde6fd;"></div>
<div class=t style="top:809.0px;font-size:19px;line-height:19px;color:#252423;left:826.6px;transform:scaleX(0.9);transform-origin:50% 0;">-1%</div>
<div class=b style="left:918px;top:797px;width:85px;height:44px;background:#cde6fd;"></div>
<div class=t style="top:809.0px;font-size:19px;line-height:19px;color:#252423;left:947.3px;transform:scaleX(0.9);transform-origin:50% 0;">6.7</div>
<div class=b style="left:1020px;top:797px;width:85px;height:42px;background:#cde6fd;"></div>
<div class=t style="top:809.0px;font-size:19px;line-height:19px;color:#252423;left:1049.3px;transform:scaleX(0.9);transform-origin:50% 0;">5.7</div>
<div class=b style="left:1122px;top:797px;width:87px;height:44px;background:#cde6fd;"></div>
<div class=t style="top:809.0px;font-size:19px;line-height:19px;color:#252423;left:1135.4px;transform:scaleX(1.0);transform-origin:50% 0;">(Blank)</div>
<div class=b style="left:307px;top:848px;width:258px;height:44px;background:#ffffff;"></div>
<div class=t style="top:858.2px;font-size:22px;line-height:22px;color:#252423;left:313.4px;transform:scaleX(0.961);transform-origin:0 0;">Clincal hrs / mth</div>
<div class=b style="left:597px;top:848px;width:87px;height:44px;background:#cde6fd;"></div>
<div class=t style="top:860.2px;font-size:19px;line-height:19px;color:#252423;left:622.0px;transform:scaleX(0.9);transform-origin:50% 0;">80.3</div>
<div class=b style="left:698px;top:848px;width:87px;height:44px;background:#cde6fd;"></div>
<div class=t style="top:860.2px;font-size:19px;line-height:19px;color:#252423;left:723.0px;transform:scaleX(0.9);transform-origin:50% 0;">74.0</div>
<div class=b style="left:801px;top:848px;width:85px;height:44px;background:#cde6fd;"></div>
<div class=t style="top:860.2px;font-size:19px;line-height:19px;color:#252423;left:829.8px;transform:scaleX(0.9);transform-origin:50% 0;">9%</div>
<div class=b style="left:918px;top:848px;width:85px;height:44px;background:#cde6fd;"></div>
<div class=t style="top:860.2px;font-size:19px;line-height:19px;color:#252423;left:942.0px;transform:scaleX(0.9);transform-origin:50% 0;">73.2</div>
<div class=b style="left:1020px;top:848px;width:85px;height:42px;background:#cde6fd;"></div>
<div class=t style="top:860.2px;font-size:19px;line-height:19px;color:#252423;left:1044.0px;transform:scaleX(0.9);transform-origin:50% 0;">56.3</div>
<div class=b style="left:1122px;top:848px;width:87px;height:44px;background:#cde6fd;"></div>
<div class=t style="top:860.2px;font-size:19px;line-height:19px;color:#252423;left:1135.4px;transform:scaleX(1.0);transform-origin:50% 0;">(Blank)</div>
<div class=b style="left:307px;top:899px;width:258px;height:44px;background:#ffffff;"></div>
<div class=t style="top:909.5px;font-size:22px;line-height:22px;color:#252423;left:313.4px;transform:scaleX(0.938);transform-origin:0 0;">Repeat referrals %</div>
<div class=b style="left:597px;top:899px;width:87px;height:44px;background:#cde6fd;"></div>
<div class=t style="top:911.5px;font-size:19px;line-height:19px;color:#252423;left:621.5px;transform:scaleX(0.9);transform-origin:50% 0;">51%</div>
<div class=b style="left:698px;top:899px;width:87px;height:44px;background:#cde6fd;"></div>
<div class=t style="top:911.5px;font-size:19px;line-height:19px;color:#252423;left:722.5px;transform:scaleX(0.9);transform-origin:50% 0;">46%</div>
<div class=b style="left:801px;top:899px;width:85px;height:44px;background:#cde6fd;"></div>
<div class=t style="top:911.5px;font-size:19px;line-height:19px;color:#252423;left:824.5px;transform:scaleX(0.9);transform-origin:50% 0;">10%</div>
<div class=b style="left:918px;top:899px;width:85px;height:44px;background:#cde6fd;"></div>
<div class=t style="top:911.5px;font-size:19px;line-height:19px;color:#252423;left:941.5px;transform:scaleX(0.9);transform-origin:50% 0;">33%</div>
<div class=b style="left:1020px;top:899px;width:85px;height:42px;background:#cde6fd;"></div>
<div class=t style="top:911.5px;font-size:19px;line-height:19px;color:#252423;left:1043.5px;transform:scaleX(0.9);transform-origin:50% 0;">33%</div>
<div class=b style="left:1122px;top:899px;width:87px;height:44px;background:#cde6fd;"></div>
<div class=t style="top:911.5px;font-size:19px;line-height:19px;color:#252423;left:1135.4px;transform:scaleX(1.0);transform-origin:50% 0;">(Blank)</div>
<div class=b style="left:307px;top:950px;width:258px;height:44px;background:#ffffff;"></div>
<div class=t style="top:960.8px;font-size:22px;line-height:22px;color:#252423;left:313.4px;">Intervs / mth / patient</div>
<div class=b style="left:597px;top:950px;width:87px;height:44px;background:#cde6fd;"></div>
<div class=t style="top:962.8px;font-size:19px;line-height:19px;color:#252423;left:627.3px;transform:scaleX(0.9);transform-origin:50% 0;">2.9</div>
<div class=b style="left:698px;top:950px;width:87px;height:44px;background:#cde6fd;"></div>
<div class=t style="top:962.8px;font-size:19px;line-height:19px;color:#252423;left:728.3px;transform:scaleX(0.9);transform-origin:50% 0;">2.7</div>
<div class=b style="left:801px;top:950px;width:85px;height:44px;background:#cde6fd;"></div>
<div class=t style="top:962.8px;font-size:19px;line-height:19px;color:#252423;left:829.8px;transform:scaleX(0.9);transform-origin:50% 0;">4%</div>
<div class=b style="left:918px;top:950px;width:85px;height:44px;background:#cde6fd;"></div>
<div class=t style="top:962.8px;font-size:19px;line-height:19px;color:#252423;left:947.3px;transform:scaleX(0.9);transform-origin:50% 0;">2.8</div>
<div class=b style="left:1020px;top:950px;width:85px;height:42px;background:#cde6fd;"></div>
<div class=t style="top:962.8px;font-size:19px;line-height:19px;color:#252423;left:1049.3px;transform:scaleX(0.9);transform-origin:50% 0;">2.3</div>
<div class=b style="left:1122px;top:950px;width:87px;height:44px;background:#cde6fd;"></div>
<div class=t style="top:962.8px;font-size:19px;line-height:19px;color:#252423;left:1135.4px;transform:scaleX(1.0);transform-origin:50% 0;">(Blank)</div>
<div class=b style="left:1245px;top:595px;width:473px;height:400px;background:#a9d5fd;"></div>
<div class=t style="top:597.1px;font-size:19px;line-height:19px;color:#252423;left:1250.0px;transform:scaleX(0.994);transform-origin:0 0;">Patient Visits / day</div>
<svg class=b style="left:1251px;top:635px;" width="12" height="12" viewBox="0 0 12 12"><circle cx="6" cy="6" r="5.7" fill="#118dff"/></svg>
<div class=t style="top:633.0px;font-size:15.5px;line-height:15.5px;color:#605e5c;left:1264.5px;transform:scaleX(0.936);transform-origin:0 0;">Selection</div>
<svg class=b style="left:1332px;top:635px;" width="12" height="12" viewBox="0 0 12 12"><circle cx="6" cy="6" r="5.7" fill="#1a8b9d"/></svg>
<div class=t style="top:633.0px;font-size:15.5px;line-height:15.5px;color:#605e5c;left:1345.5px;transform:scaleX(0.931);transform-origin:0 0;">All Teams</div>
<div class=t style="top:659.7px;font-size:13px;line-height:13px;color:#605e5c;left:1251.5px;">10</div>
<div class=t style="top:807.3px;font-size:13px;line-height:13px;color:#605e5c;left:1257.5px;">5</div>
<div class=t style="top:954.4px;font-size:13px;line-height:13px;color:#605e5c;left:1257.5px;">0</div>
<div class=t style="top:968.5px;font-size:13.5px;line-height:13.5px;color:#605e5c;left:1263.9px;transform:scaleX(0.952);transform-origin:0 0;">Jul 2022</div>
<div class=t style="top:968.5px;font-size:13.5px;line-height:13.5px;color:#605e5c;left:1370.0px;transform:scaleX(0.985);transform-origin:0 0;">Oct 2022</div>
<div class=t style="top:968.5px;font-size:13.5px;line-height:13.5px;color:#605e5c;left:1479.9px;transform:scaleX(0.932);transform-origin:0 0;">Jan 2023</div>
<div class=t style="top:968.5px;font-size:13.5px;line-height:13.5px;color:#605e5c;left:1585.3px;transform:scaleX(0.982);transform-origin:0 0;">Apr 2023</div>
<svg class=b style="left:0px;top:0px;pointer-events:none;" width="1920" height="1032" viewBox="0 0 1920 1032"><line x1="1276" y1="666.7" x2="1700" y2="666.7" stroke="#c8c6c4" stroke-width="1.2" stroke-dasharray="1.3 5.6" /><line x1="1276" y1="814.1" x2="1700" y2="814.1" stroke="#c8c6c4" stroke-width="1.2" stroke-dasharray="1.3 5.6" /><line x1="1276" y1="961.5" x2="1700" y2="961.5" stroke="#c8c6c4" stroke-width="1.2" stroke-dasharray="1.3 5.6" /><line x1="1288.5" y1="666" x2="1288.5" y2="961" stroke="#c8c6c4" stroke-width="1.2" stroke-dasharray="1.3 5.6" /><line x1="1397.3" y1="666" x2="1397.3" y2="961" stroke="#c8c6c4" stroke-width="1.2" stroke-dasharray="1.3 5.6" /><line x1="1505.8" y1="666" x2="1505.8" y2="961" stroke="#c8c6c4" stroke-width="1.2" stroke-dasharray="1.3 5.6" /><line x1="1612.3" y1="666" x2="1612.3" y2="961" stroke="#c8c6c4" stroke-width="1.2" stroke-dasharray="1.3 5.6" /><line x1="1277.2" y1="708.6" x2="1695" y2="708.6" stroke="#e7703a" stroke-width="3.2" stroke-linecap="round" stroke-dasharray="1.2 5.675" /><line x1="1277.2" y1="854.4" x2="1695" y2="854.4" stroke="#e7703a" stroke-width="3.2" stroke-linecap="round" stroke-dasharray="1.2 5.675" /><line x1="1278" y1="961.5" x2="1694" y2="961.5" stroke="#5aa9f5" stroke-width="3" stroke-dasharray="5.5 5.8" /><path d="M1288.5 767.0 C1294.5 766.5 1312.6 762.4 1324.6 763.9 C1336.6 765.4 1348.7 773.3 1360.7 776.1 C1372.7 778.9 1384.8 778.1 1396.8 780.8 C1408.8 783.5 1420.9 790.6 1432.9 792.4 C1444.9 794.1 1457.0 790.3 1469.0 791.3 C1481.0 792.3 1493.1 797.1 1505.1 798.5 C1517.1 799.9 1529.2 799.3 1541.2 799.6 C1553.2 799.9 1565.3 798.4 1577.3 800.5 C1589.3 802.6 1601.4 809.7 1613.4 812.0 C1625.4 814.3 1637.5 814.6 1649.5 814.5 C1661.5 814.4 1679.6 811.8 1685.6 811.3" fill="none" stroke="#117c8c" stroke-width="2.8" stroke-linecap="round" stroke-dasharray="4.6 6.7" /><path d="M1288.5 760.5 C1294.5 758.7 1312.6 749.4 1324.6 749.7 C1336.6 750.1 1348.7 759.1 1360.7 762.6 C1372.7 766.1 1384.8 769.1 1396.8 771.0 C1408.8 772.9 1420.9 774.4 1432.9 774.0 C1444.9 773.6 1457.0 769.0 1469.0 768.7 C1481.0 768.4 1493.1 772.6 1505.1 772.3 C1517.1 772.0 1529.2 768.6 1541.2 766.7 C1553.2 764.8 1565.3 760.8 1577.3 760.8 C1589.3 760.8 1601.4 767.5 1613.4 766.4 C1625.4 765.3 1637.5 756.0 1649.5 754.2 C1661.5 752.4 1679.6 755.5 1685.6 755.8" fill="none" stroke="#118dff" stroke-width="4" stroke-linecap="round" /></svg>
<div class=t style="top:951.6px;font-size:13.5px;line-height:13.5px;color:#3a8ef0;left:1277.6px;transform:scaleX(0.933);transform-origin:0 0;">BM: 0.0</div>
</body></html>
